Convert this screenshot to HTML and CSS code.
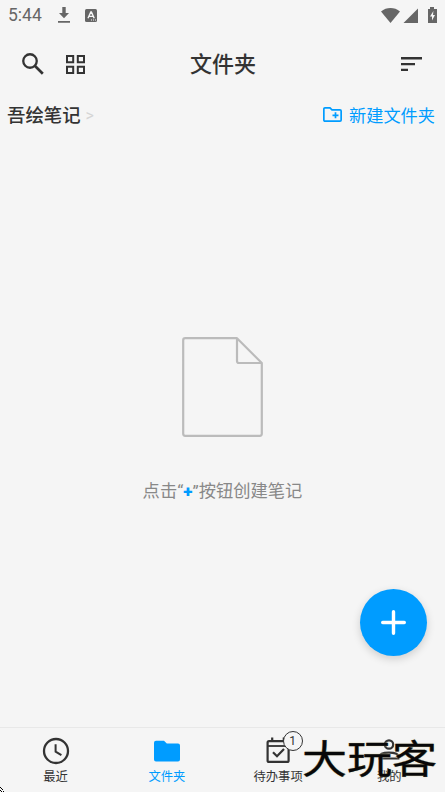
FILE: index.html
```html
<!DOCTYPE html>
<html lang="zh-CN">
<head>
  <meta charset="UTF-8">
  <title>文件夹</title>
  <link rel="stylesheet" href="styles.css">
</head>
<body>
  <div class="app">
    <div class="status-bar">
      <span class="time">5:44</span>
      <svg class="download" width="12" height="16" viewBox="0 0 12 16"><path d="M4.3 0h3.4v6H11l-5 5.2L1 6h3.3zM0 14h12v1.7H0z"/></svg>
      <svg class="lang" width="12" height="13" viewBox="0 0 12 13"><rect width="12" height="13" rx="1.5"/><path d="M3 9.2L5.8 3h.6l2.8 6.2M4 7.4h4" fill="none" stroke="#f5f5f5" stroke-width="1.4"/><path d="M6 11h1m1 0h1m1 0h1" stroke="#f5f5f5"/></svg>
      <svg class="signals" width="56" height="17" viewBox="0 0 56 17">
        <path d="M0 4.4C5.5-.1 13.5-.1 19 4.4L9.5 16z"/>
        <path d="M37 1.5V16H22.5z"/>
        <path d="M49 0h4v2h3v14H47V2h2z"/>
        <path d="M52.4 4L49 9.5h2v4l3-5.5h-2z" fill="#f5f5f5"/>
      </svg>
    </div>

    <header class="top-bar">
      <div class="tools">
        <svg width="22" height="22" viewBox="0 0 22 22" fill="none" stroke="#333" stroke-width="2.3"><circle cx="8" cy="8" r="6.75"/><path d="M12.8 12.8l8 8" stroke-width="2.7"/></svg>
        <svg width="19" height="19" viewBox="0 0 19 19" fill="none" stroke="#333" stroke-width="2"><path d="M1 1h6.2v6.2H1zM11.8 1H18v6.2h-6.2zM1 11.8h6.2V18H1zM11.8 11.8H18V18h-6.2z"/></svg>
      </div>
      <h1>文件夹</h1>
      <svg class="sort" width="21" height="14" viewBox="0 0 21 14" fill="#333"><path d="M0 0h21v2.4H0zM0 6h14v2.2H0zM0 11.8h7V14H0z"/></svg>
    </header>

    <div class="path-row">
      <span class="path-name">吾绘笔记</span>
      <span class="arrow">&gt;</span>
      <a class="new-folder">
        <svg width="19" height="15" viewBox="0 0 19 15" fill="none" stroke="#009cff" stroke-width="1.7"><path d="M2 .85h5l2 2h8q1.15 0 1.15 1.15v9q0 1.15-1.15 1.15H2Q.85 14.15.85 13V2Q.85.85 2 .85zM12.5 5.3v6M9.5 8.3h6"/></svg>
        <span>新建文件夹</span>
      </a>
    </div>

    <main class="empty">
      <svg width="82" height="100" viewBox="0 0 82 100" fill="none" stroke="#bbb" stroke-width="2.2" stroke-linejoin="round"><path d="M3 1.2h52L79.8 26v70.8q0 2-2 2H3.2q-2 0-2-2V3.2q0-2 2-2zM55 1.2V24q0 2 2 2h22.8"/></svg>
      <p>点击<span class="quote">“</span><b>+</b><span class="quote">”</span>按钮创建笔记</p>
    </main>

    <button class="add">
      <svg width="25" height="25" viewBox="0 0 25 25" stroke="#fff" stroke-width="3.4" stroke-linecap="round"><path d="M12.5 1.7v21.6M1.7 12.5h21.6"/></svg>
    </button>

    <nav class="tab-bar">
      <a class="tab">
        <svg width="28" height="28" viewBox="0 0 28 28" fill="none" stroke="#333" stroke-width="2.3"><circle cx="14" cy="14" r="12"/><path d="M13.6 7.2v7.4l5.8 3.6" stroke-width="2"/></svg>
        <span>最近</span>
      </a>
      <a class="tab active">
        <svg width="28" height="28" viewBox="0 0 28 28" fill="#009cff"><path d="M3 3.8h8l2.8 2.6H25q2 0 2 2v14q0 2-2 2H3q-2 0-2-2V5.8q0-2 2-2z"/></svg>
        <span>文件夹</span>
      </a>
      <a class="tab">
        <svg width="28" height="28" viewBox="0 0 28 28" fill="none" stroke="#333" stroke-width="2.2"><rect x="3.6" y="4.1" width="21" height="20.8" rx="1.5"/><path d="M3.6 9h21" stroke-width="1.8"/><path d="M8.2 .5v4M19.8 .5v4"/><path d="M9 15.3l4 4 7-7.3"/></svg>
        <span class="badge">1</span>
        <span>待办事项</span>
      </a>
      <a class="tab">
        <svg width="28" height="28" viewBox="0 0 28 28" fill="none" stroke="#333" stroke-width="2.2"><circle cx="14" cy="7.5" r="4.2"/><path d="M4.7 21.5v-2.2c0-5 18.6-5 18.6 0v2.2z"/></svg>
        <span>我的</span>
      </a>
    </nav>

    <div class="watermark">大玩客</div>
    <svg class="corner" width="5" height="5" viewBox="0 0 5 5"><path d="M0 0h1v1H0zM1 1h1v1H1zM0 3h1v1H0zM2 2h1v1H2zM3 4h1v1H3zM1 4h1v1H1z"/></svg>
  </div>
</body>
</html>
```
FILE: styles.css
```css
* {
  box-sizing: border-box;
}

body {
  margin: 0;
  background-color: #f5f5f5;
  color: #333;
  font-family: Roboto, "Noto Sans CJK SC", sans-serif;
}

.app {
  position: relative;
  display: flex;
  flex-direction: column;
  height: 100vh;
  overflow: hidden;
}

svg {
  display: block;
  flex-shrink: 0;
}

.status-bar {
  display: flex;
  align-items: center;
  height: 30px;
  padding: 0 8px;
  color: #666;
  fill: #666;
}

.time {
  width: 50px;
  font-size: 17.5px;
  line-height: 30px;
}

.lang {
  margin-left: 15px;
}

.signals {
  margin-left: auto;
}

.top-bar {
  display: grid;
  grid-template-columns: 1fr auto 1fr;
  align-items: center;
  height: 68px;
  padding: 0 22px 0 23px;
}

.tools {
  display: flex;
  align-items: center;
  gap: 22px;
  margin-left: -1px;
}

h1 {
  margin: 2px 0 0;
  font-size: 22px;
  font-weight: 500;
  line-height: 32px;
}

.sort {
  justify-self: end;
  margin-right: 1px;
}

.path-row {
  display: flex;
  align-items: center;
  height: 32px;
  padding: 0 10px 0 7px;
}

.path-name {
  font-size: 18.4px;
  font-weight: 500;
}

.arrow {
  margin: 2px 0 0 5px;
  color: #d5d5d5;
  font-size: 16px;
}

.new-folder {
  display: flex;
  align-items: center;
  gap: 7px;
  margin-left: auto;
  color: #009cff;
  font-size: 17.2px;
}

.empty {
  display: flex;
  flex: 1;
  flex-direction: column;
  align-items: center;
  padding-top: 207px;
}

.empty p {
  margin: 41px 0 0;
  color: #888;
  font-size: 17.3px;
  line-height: 26px;
  white-space: nowrap;
}

.empty b {
  color: #009cff;
  font-weight: 900;
}

.add {
  position: absolute;
  right: 18px;
  bottom: 136px;
  display: flex;
  align-items: center;
  justify-content: center;
  width: 67px;
  height: 67px;
  padding: 0;
  border: 0;
  border-radius: 50%;
  background-color: #009cff;
  box-shadow: 0 3px 8px rgba(0, 0, 0, 0.16);
}

.tab-bar {
  display: grid;
  grid-template-columns: repeat(4, 1fr);
  height: 65px;
  border-top: 1px solid #e8e8e8;
}

.tab {
  position: relative;
  display: flex;
  flex-direction: column;
  align-items: center;
  padding-top: 9px;
  font-size: 12.3px;
  line-height: 18px;
}

.tab svg {
  margin-bottom: 3px;
}

.active {
  color: #009cff;
}

.badge {
  position: absolute;
  top: 3px;
  left: 60px;
  width: 20px;
  height: 20px;
  border: 1.3px solid #333;
  border-radius: 50%;
  background-color: #f5f5f5;
  font-size: 12px;
  line-height: 18px;
  text-align: center;
}

.watermark {
  position: absolute;
  left: 302px;
  top: 725px;
  color: #080808;
  font-family: "Noto Sans CJK SC", sans-serif;
  font-size: 45px;
  font-weight: 400;
  line-height: 64px;
  white-space: nowrap;
  transform: scaleY(0.86);
  text-shadow: 0 0 2px #d8cf9c;
  -webkit-text-stroke: 0.4px #080808;
}

.corner {
  position: absolute;
  left: 0;
  bottom: 0;
}
```
